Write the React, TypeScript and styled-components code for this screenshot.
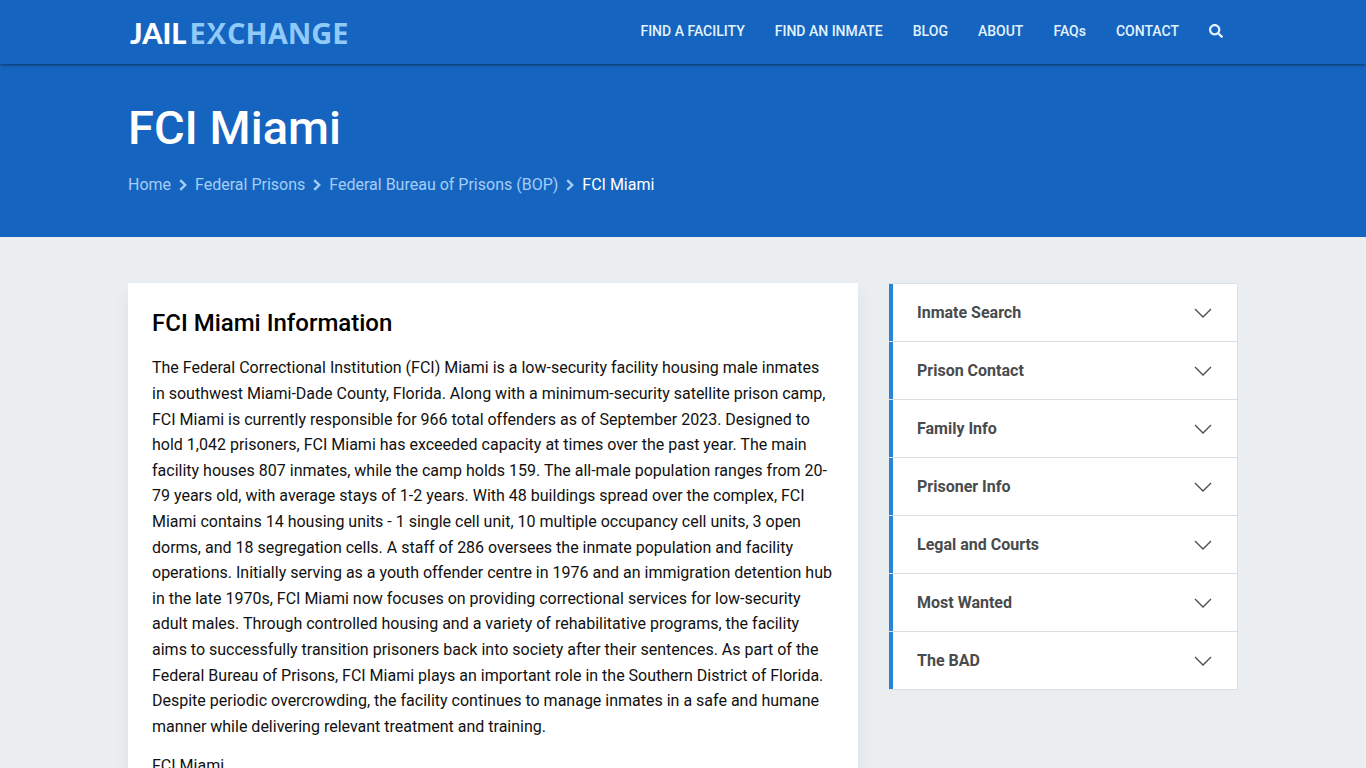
import React from "react";
import styled, { createGlobalStyle } from "styled-components";
import { FaSearch } from "react-icons/fa";

const GlobalStyle = createGlobalStyle`
  *, *::before, *::after { box-sizing: border-box; }
  body {
    margin: 0;
    background: #eaeef1;
    color: #111;
    font-family: Roboto, "Liberation Sans", sans-serif;
    font-size: 16px;
    line-height: 1.6;
  }
`;

const Container = styled.div`
  width: 100%;
  max-width: 1140px;
  margin: 0 auto;
  padding: 0 15px;
`;

const Header = styled.header`
  position: relative;
  background: #1565c0;
  box-shadow: 0 1px 3px rgba(0, 0, 0, 0.5);
`;

const HeaderRow = styled(Container)`
  display: flex;
  align-items: center;
  justify-content: space-between;
  min-height: 64px;
`;

const Logo = styled.a`
  display: flex;
  align-items: baseline;
  gap: 3px;
  padding: 2px 0 0 2px;
  color: #fff;
  font-family: Lato, "Open Sans", sans-serif;
  font-size: 29px;
  font-weight: 900;
  line-height: 40px;
  text-decoration: none;
`;

const LogoAccent = styled.span`
  color: #90caf9;
  font-family: "Open Sans", "Noto Sans", sans-serif;
  font-weight: 700;
`;

const CutLetter = styled.span`
  position: relative;
  margin: 0 1px;

  &::after {
    content: "";
    position: absolute;
    top: 12px;
    left: 6px;
    width: 2px;
    height: 14px;
    background: #1565c0;
    transform: rotate(33deg);
  }
`;

const Nav = styled.nav`
  display: flex;
  align-items: center;
  flex-wrap: wrap;
  gap: 30px;
  padding-right: 15px;
  margin-top: -2px;
`;

const NavLink = styled.a`
  color: #e3f2fd;
  font-size: 14px;
  font-weight: 500;
  text-decoration: none;
`;

const SearchButton = styled.button`
  display: flex;
  padding: 0;
  border: 0;
  background: none;
  color: #e3f2fd;
  font-size: 14px;
  cursor: pointer;
`;

const Hero = styled.section`
  padding: 32px 0 39px;
  background: #1565c0;
`;

const HeroTitle = styled.h1`
  margin: 0 0 12px;
  color: #fff;
  font-size: 47px;
  font-weight: 500;
  line-height: 64px;
`;

const Breadcrumb = styled.ol`
  display: flex;
  flex-wrap: wrap;
  align-items: center;
  gap: 8px;
  margin: 0;
  padding: 0;
  list-style: none;
  line-height: 26px;
`;

const Crumb = styled.li`
  display: flex;
  align-items: center;
  gap: 8px;
  color: #fff;
`;

const CrumbLink = styled.a`
  color: #a5cdf5;
  text-decoration: none;
`;

const Columns = styled(Container)`
  display: grid;
  grid-template-columns: minmax(0, 730fr) minmax(0, 350fr);
  gap: 30px;
  align-items: start;
  padding-top: 46px;
  padding-bottom: 46px;
`;

const Card = styled.article`
  padding: 21px 24px;
  background: #fff;
  box-shadow: 0 8px 16px rgba(0, 0, 0, 0.06);
`;

const CardTitle = styled.h2`
  margin: 0 0 13px;
  color: #000;
  font-size: 24px;
  font-weight: 500;
`;

const Paragraph = styled.p`
  margin: 0 0 14px;
`;

const Accordion = styled.div`
  border: 1px solid #dcdfe2;
  border-left: 0;
  margin-left: 1px;
`;

const AccordionButton = styled.button`
  display: flex;
  align-items: center;
  justify-content: space-between;
  width: 100%;
  padding: 16px 25px 15px 28px;
  border: 0;
  background: linear-gradient(#2585d8, #2585d8) left / 4px 100% no-repeat #fff;
  color: #494b4d;
  font-family: inherit;
  font-size: 16px;
  font-weight: 700;
  line-height: 26px;
  text-align: left;
  cursor: pointer;

  & + & {
    border-top: 1px solid #dcdfe2;
  }
`;

const nav = ["FIND A FACILITY", "FIND AN INMATE", "BLOG", "ABOUT", "FAQs", "CONTACT"];
const crumbs = ["Home", "Federal Prisons", "Federal Bureau of Prisons (BOP)"];
const sections = [
  "Inmate Search",
  "Prison Contact",
  "Family Info",
  "Prisoner Info",
  "Legal and Courts",
  "Most Wanted",
  "The BAD",
];

const CrumbArrow = () => (
  <svg width="8" height="12" viewBox="0 0 8 12" fill="none" aria-hidden="true">
    <path d="M1.2 1.2 6.2 6 1.2 10.8" stroke="#a5cdf5" strokeWidth="2.4" />
  </svg>
);

const Chevron = () => (
  <svg width="18" height="10" viewBox="0 0 18 10" fill="none" aria-hidden="true">
    <path d="M1 1l8 8 8-8" stroke="#494b4d" strokeWidth="1.3" />
  </svg>
);

export default function App() {
  return (
    <>
      <GlobalStyle />
      <Header>
        <HeaderRow>
          <Logo href="#">
            <span>JAIL</span>
            <LogoAccent>
              E<CutLetter>X</CutLetter>CHANGE
            </LogoAccent>
          </Logo>
          <Nav>
            {nav.map((item) => (
              <NavLink key={item} href="#">{item}</NavLink>
            ))}
            <SearchButton type="button" aria-label="Search">
              <FaSearch />
            </SearchButton>
          </Nav>
        </HeaderRow>
      </Header>
      <Hero>
        <Container>
          <HeroTitle>FCI Miami</HeroTitle>
          <Breadcrumb>
            {crumbs.map((item) => (
              <Crumb key={item}>
                <CrumbLink href="#">{item}</CrumbLink>
                <CrumbArrow />
              </Crumb>
            ))}
            <Crumb aria-current="page">FCI Miami</Crumb>
          </Breadcrumb>
        </Container>
      </Hero>
      <Columns as="main">
        <Card>
          <CardTitle>FCI Miami Information</CardTitle>
          <Paragraph>
            The Federal Correctional Institution (FCI) Miami is a low-security facility housing male
            inmates in southwest Miami-Dade County, Florida. Along with a minimum-security satellite
            prison camp, FCI Miami is currently responsible for 966 total offenders as of September
            2023. Designed to hold 1,042 prisoners, FCI Miami has exceeded capacity at times over the
            past year. The main facility houses 807 inmates, while the camp holds 159. The all-male
            population ranges from 20-79 years old, with average stays of 1-2 years. With 48
            buildings spread over the complex, FCI Miami contains 14 housing units - 1 single cell
            unit, 10 multiple occupancy cell units, 3 open dorms, and 18 segregation cells. A staff
            of 286 oversees the inmate population and facility operations. Initially serving as a
            youth offender centre in 1976 and an immigration detention hub in the late 1970s, FCI
            Miami now focuses on providing correctional services for low-security adult males.
            Through controlled housing and a variety of rehabilitative programs, the facility aims to
            successfully transition prisoners back into society after their sentences. As part of the
            Federal Bureau of Prisons, FCI Miami plays an important role in the Southern District of
            Florida. Despite periodic overcrowding, the facility continues to manage inmates in a
            safe and humane manner while delivering relevant treatment and training.
          </Paragraph>
          <Paragraph>FCI Miami</Paragraph>
        </Card>
        <Accordion>
          {sections.map((item) => (
            <AccordionButton key={item} type="button" aria-expanded="false">
              {item}
              <Chevron />
            </AccordionButton>
          ))}
        </Accordion>
      </Columns>
    </>
  );
}
